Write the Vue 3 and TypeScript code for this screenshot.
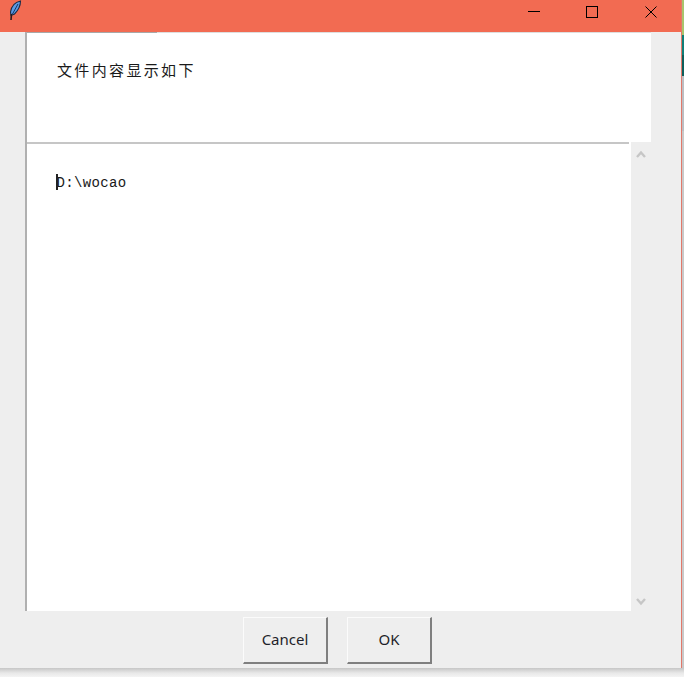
<script setup lang="ts">
const stripSegments = [
  { color: '#a9c46c', height: 35 },
  { color: '#0f7e78', height: 20 },
  { color: '#0c5f5c', height: 21 },
  { color: '#bcbec2', height: 55 },
  { color: '#c9c9c9', height: 537 }
]
</script>

<template>
  <div class="page">
    <div class="top">
      <div class="window">
        <header class="titlebar">
          <svg class="feather" width="14" height="21" viewBox="0 0 14 21">
            <path d="M12.5 1 C7.5 2 3.5 6 2.5 12 L3 15.5 L6.5 14 C9.5 11 12.5 6 12.5 1 Z" fill="#5b9be6" stroke="#1b2a44" stroke-width="1.1" />
            <path d="M10 4 L4.5 14" stroke="#16335f" stroke-width="1" fill="none" />
            <path d="M3.5 14 L3 20" stroke="#2a1a1a" stroke-width="1.6" fill="none" />
          </svg>
          <div class="controls">
            <svg width="12" height="12" viewBox="0 0 12 12"><path d="M0 5.5 H12" stroke="#000" stroke-width="1" /></svg>
            <svg width="12" height="12" viewBox="0 0 12 12"><rect x="0.5" y="0.5" width="11" height="11" fill="none" stroke="#000" stroke-width="1" /></svg>
            <svg class="close" width="12" height="12" viewBox="0 0 12 12"><path d="M0.5 0.5 L11.5 11.5 M11.5 0.5 L0.5 11.5" stroke="#000" stroke-width="1" /></svg>
          </div>
        </header>

        <main class="content">
          <div class="label-box">
            <span class="label-text">文件内容显示如下</span>
          </div>

          <div class="text-row">
            <div class="text-area">
              <span class="caret"></span>
              <span class="text-line">D:\wocao</span>
            </div>
            <div class="scrollbar">
              <svg width="10" height="8" viewBox="0 0 10 8"><path d="M1 7 L5 2.5 L9 7" fill="none" stroke="#c6c6c6" stroke-width="2.4" /></svg>
              <svg width="10" height="8" viewBox="0 0 10 8"><path d="M1 1 L5 5.5 L9 1" fill="none" stroke="#c6c6c6" stroke-width="2.4" /></svg>
            </div>
          </div>

          <div class="actions">
            <button class="btn" type="button">Cancel</button>
            <button class="btn" type="button">OK</button>
          </div>
        </main>
      </div>
      <div class="strip">
        <div
          v-for="(segment, index) in stripSegments"
          :key="index"
          :style="{ background: segment.color, height: segment.height + 'px' }"
        ></div>
      </div>
    </div>
    <div class="shadow"></div>
  </div>
</template>

<style>
html,
body {
  margin: 0;
  background: #f4f4f4;
  overflow: hidden;
}
</style>

<style scoped>
.page {
  width: 684px;
  height: 677px;
  display: flex;
  flex-direction: column;
  overflow: hidden;
}
.top {
  display: flex;
  height: 668px;
  flex: none;
}
.window {
  width: 681px;
  height: 668px;
  flex: none;
  box-sizing: content-box;
  border-right: 1px solid #e2786a;
  background: #eeeeee;
  display: flex;
  flex-direction: column;
}
.strip {
  width: 2px;
  flex: none;
  display: flex;
  flex-direction: column;
}
.titlebar {
  height: 32px;
  flex: none;
  background: #f26b52;
  display: flex;
  align-items: flex-start;
  justify-content: space-between;
}
.feather {
  margin: 0 0 0 8px;
}
.controls {
  display: flex;
  gap: 46px;
  padding: 6px 24px 0 0;
}
.close {
  margin-left: 1px;
}
.content {
  flex: 1;
  display: flex;
  flex-direction: column;
  padding-left: 25px;
}
.label-box {
  width: 626px;
  height: 110px;
  flex: none;
  box-sizing: border-box;
  background: linear-gradient(#a8a8a8, #a8a8a8) no-repeat 0 0 / 130px 1px,
    linear-gradient(#dedede, #dedede) no-repeat 0 0 / 100% 1px,
    #fff;
  border-left: 2px solid #b0b0b0;
  padding: 28px 0 0 30px;
  line-height: 20px;
}
.label-text {
  font-family: "Noto Sans CJK SC", "Noto Sans", sans-serif;
  font-size: 15px;
  letter-spacing: 2.35px;
  color: #1a1a1a;
}
.text-row {
  display: flex;
  height: 469px;
  flex: none;
}
.text-area {
  width: 606px;
  flex: none;
  box-sizing: border-box;
  background: linear-gradient(#c6c6c6, #c6c6c6) no-repeat 0 0 / 602px 2px, #fff;
  border-left: 2px solid #b0b0b0;
  padding: 32px 0 0 29.5px;
  display: flex;
  align-items: flex-start;
  position: relative;
}
.caret {
  position: absolute;
  left: 29px;
  top: 32px;
  width: 2px;
  height: 16px;
  background: #222;
}
.text-line {
  font-family: "Liberation Mono", monospace;
  font-size: 14px;
  line-height: 18px;
  letter-spacing: 0.35px;
  color: #1a1a1a;
}
.scrollbar {
  flex: none;
  width: 20px;
  padding: 8px 0 5px 5px;
  box-sizing: border-box;
  display: flex;
  flex-direction: column;
  justify-content: space-between;
}
.actions {
  flex: 1;
  display: flex;
  gap: 19px;
  padding: 6px 0 0 218px;
  box-sizing: border-box;
}
.btn {
  width: 85px;
  height: 47px;
  box-sizing: border-box;
  background: #eeeeee;
  border-style: solid;
  border-width: 1px 2px 2px 1px;
  border-color: #fbfbfb #7f7f7f #7f7f7f #fbfbfb;
  font-family: "Noto Sans", sans-serif;
  font-size: 15px;
  color: #1f1f2a;
  padding: 0 0 2px 0;
}
.shadow {
  height: 9px;
  flex: none;
  background: linear-gradient(#c6c6c6, #e8e8e8 55%, #f4f4f4);
}
</style>
